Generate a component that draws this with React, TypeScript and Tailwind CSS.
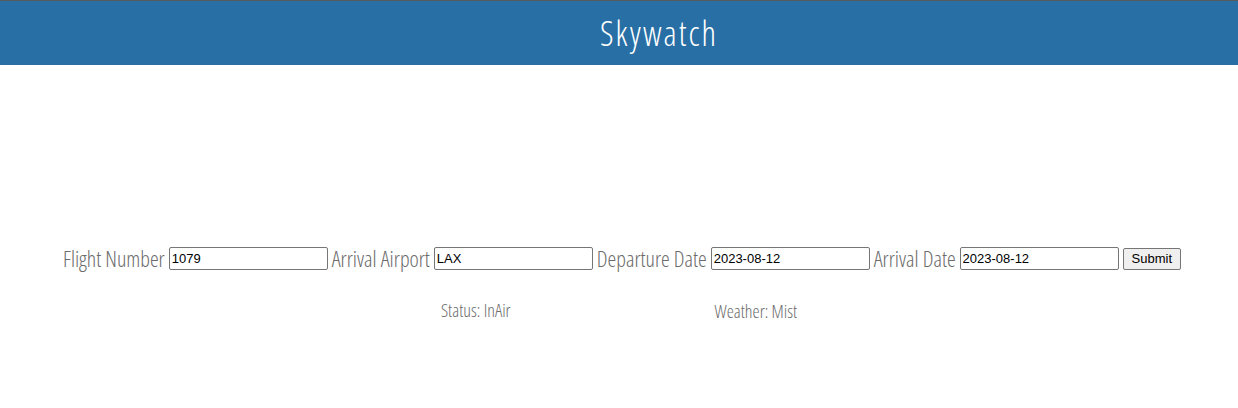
export default function App() {
  const fields = [
    { label: "Flight Number", value: "1079" },
    { label: "Arrival Airport", value: "LAX" },
    { label: "Departure Date", value: "2023-08-12" },
    { label: "Arrival Date", value: "2023-08-12" },
  ];

  return (
    <div className="min-h-[408px] bg-white font-['Open_Sans',sans-serif] font-light [font-stretch:75%]">
      <header className="h-[65px] bg-[#276fa5] border-t border-[#5a5a5a] flex items-center justify-center pl-[80px]">
        <h1 className="text-[34px] font-light tracking-[2px] text-white leading-none">Skywatch</h1>
      </header>

      <form className="mt-[177px] flex items-center justify-center gap-[4px] pl-[6px] text-[#6b6b6b]" onSubmit={(e) => e.preventDefault()}>
        {fields.map((f) => (
          <label key={f.label} className="flex items-center gap-[4px] text-[22px]">
            {f.label}
            <input
              defaultValue={f.value}
              className="w-[159px] h-[23px] border border-[#767676] rounded-[2px] px-[2px] text-[13px] text-black font-['Liberation_Sans',sans-serif] font-normal [font-stretch:100%]"
            />
          </label>
        ))}
        <button
          type="submit"
          className="h-[22px] px-[8px] bg-[#efefef] border border-[#767676] rounded-[2px] text-[13px] text-black font-['Liberation_Sans',sans-serif] font-normal [font-stretch:100%]"
        >
          Submit
        </button>
      </form>

      <div className="mt-[22px] flex justify-center gap-[204px] text-[18px] text-[#6b6b6b]">
        <p>Status: InAir</p>
        <p className="mt-[1px]">Weather: Mist</p>
      </div>
    </div>
  );
}
